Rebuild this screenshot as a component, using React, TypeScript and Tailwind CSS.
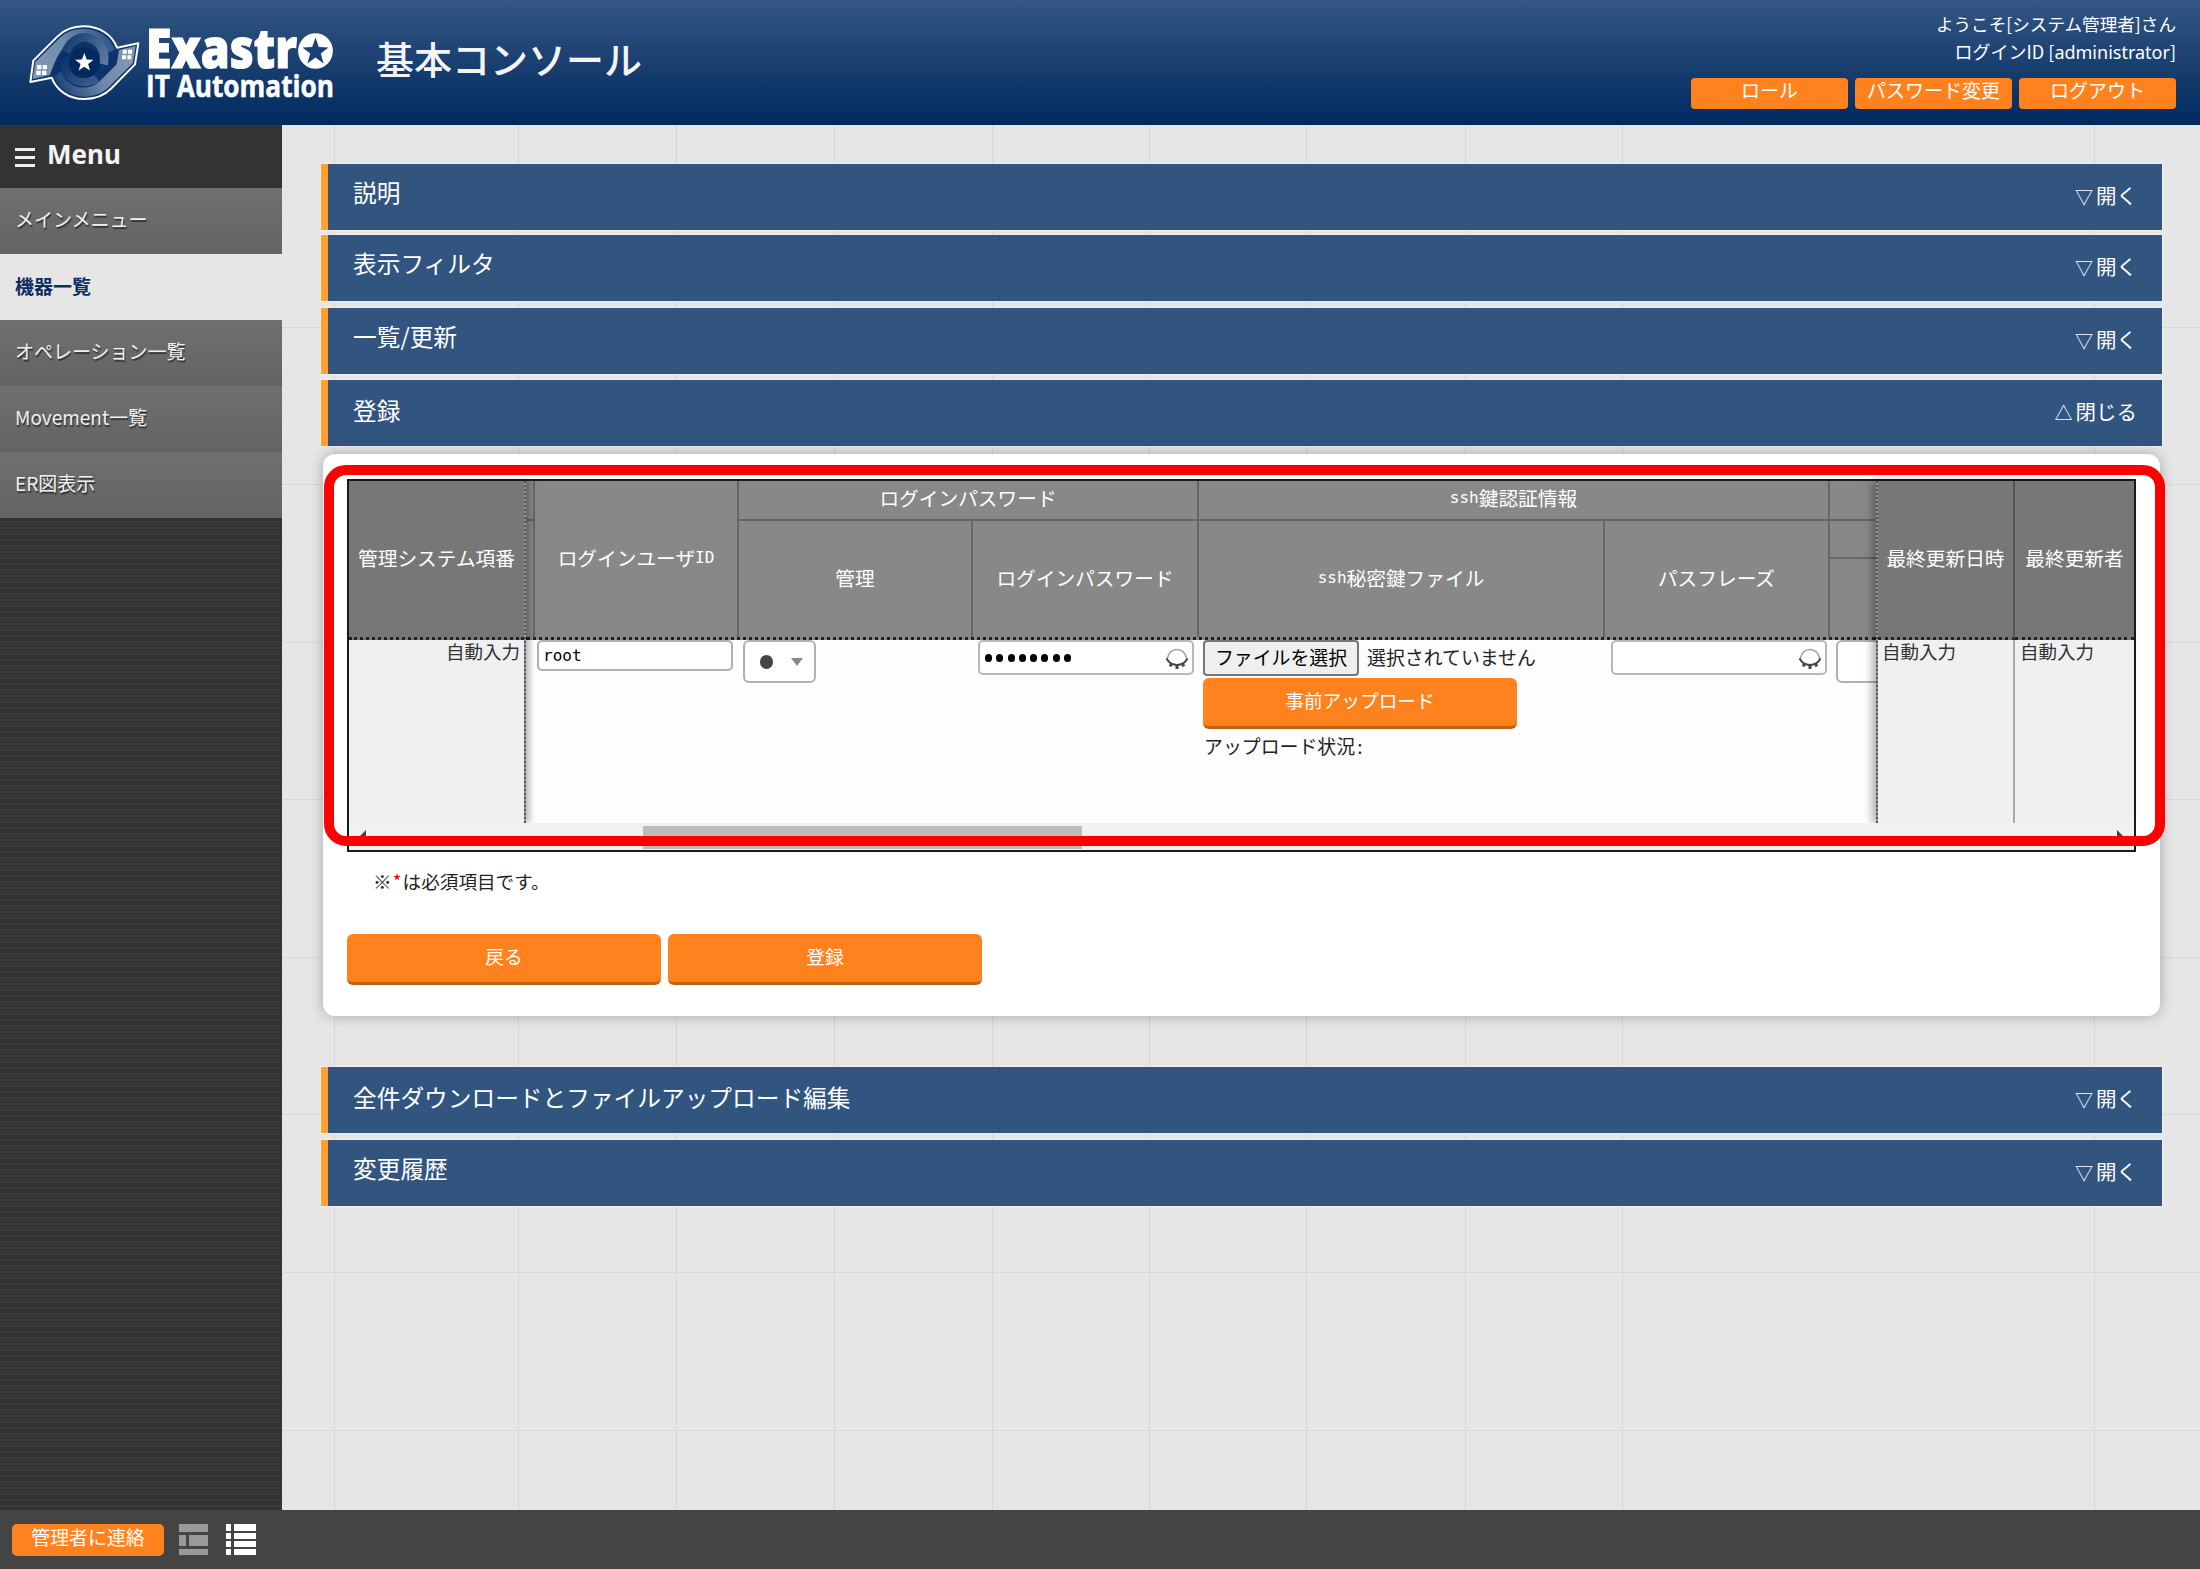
import React from "react";

const JP = "font-['Noto_Sans_CJK_JP',sans-serif]";

const V_LINES = [334, 518, 676, 834, 992, 1149, 1306, 1465, 1622, 2094];
const H_LINES = [327, 484, 642, 799, 957, 1114, 1272, 1430];

function Logo() {
  return (
    <svg width="127" height="95" viewBox="0 0 381 285" className="block">
      <defs>
        <linearGradient id="bandA" gradientUnits="userSpaceOnUse" x1="60" y1="170" x2="280" y2="80">
          <stop offset="0" stopColor="#8397b4" />
          <stop offset="0.45" stopColor="#6f88aa" />
          <stop offset="1" stopColor="#2f5488" />
        </linearGradient>
        <linearGradient id="bandB" gradientUnits="userSpaceOnUse" x1="320" y1="110" x2="110" y2="210">
          <stop offset="0" stopColor="#8397b4" />
          <stop offset="0.45" stopColor="#7089ab" />
          <stop offset="1" stopColor="#1c4479" />
        </linearGradient>
        <linearGradient id="swirlR" gradientUnits="userSpaceOnUse" x1="150" y1="80" x2="260" y2="150">
          <stop offset="0" stopColor="#1a4277" />
          <stop offset="1" stopColor="#627ca2" />
        </linearGradient>
        <linearGradient id="swirlL" gradientUnits="userSpaceOnUse" x1="130" y1="120" x2="220" y2="215">
          <stop offset="0" stopColor="#06306a" />
          <stop offset="1" stopColor="#3c5f8f" />
        </linearGradient>
      </defs>
      <path
        d="M31 201 L40 137 L112 65 C135 42 162 34 190 34 C238 34 276 58 291 98 L355 85 L345 148 L272 222 C250 244 222 252 192 252 C146 252 110 226 95 188 Z"
        fill="#0d3468"
        stroke="#fff"
        strokeWidth="6"
        strokeLinejoin="round"
      />
      <path d="M38 192 L46 141 L118 70 C138 50 164 41 190 41 C234 41 270 64 285 104 L262 114 C240 66 176 54 140 88 C116 112 104 140 90 180 Z" fill="url(#bandA)" />
      <path d="M347 93 L338 145 L267 216 C247 236 220 245 192 245 C150 245 117 222 102 186 L122 170 C144 222 204 232 240 198 L290 148 L297 105 Z" fill="url(#bandB)" />
      <path d="M138 112 A58 62 0 0 1 250 148" fill="none" stroke="url(#swirlR)" strokeWidth="26" />
      <path d="M138 112 A62 62 0 0 0 230 190" fill="none" stroke="url(#swirlL)" strokeWidth="24" />
      <circle cx="193" cy="142" r="46" fill="#03295f" />
      <path d="M193 114l7 19.500 20.500.6-16.200 12.700 5.800 19.800-17.100-11.700-17.100 11.700 5.800-19.800-16.200-12.700 20.500-.6z" fill="#fff" />
      <g fill="#fff">
        <path d="M51 150h13v13H51zM68 150h13v13H68zM49 167h13v13H49zM66 167h13v13H66z" />
        <path d="M308 104h12v12h-12zM324 104h12v12h-12zM306 121h12v12h-12zM322 121h12v12h-12z" />
      </g>
    </svg>
  );
}

function StarO() {
  return (
    <svg width="35" height="36" viewBox="0 0 35 36" className="block">
      <ellipse cx="17.500" cy="18" rx="17.400" ry="17.800" fill="#fff" />
      <path d="M17.500 4.500l3.300 9.600 9.700.3-7.700 6.200 2.800 9.900-8.100-5.900-8.100 5.900 2.800-9.900-7.700-6.200 9.700-.3z" fill="#1a4176" />
    </svg>
  );
}

function Bar({ title, open, low, className = "" }: { title: string; open?: boolean; low?: boolean; className?: string }) {
  return (
    <div
      className={`flex h-[66px] items-center justify-between border-l-[7px] border-[#ffa02f] bg-[#325580] pl-[25px] pr-[25px] text-white shadow-[0_0_0_1px_rgba(255,255,255,0.35)] ${className}`}
    >
      <span className={`pb-[8px] text-[23.700px] leading-none ${low ? "pt-[3px]" : ""}`}>{title}</span>
      <span className="flex items-center pb-[3px] text-[20.500px] leading-none">
        <span className="inline-block w-[21px] text-[18px]">{open ? "△" : "▽"}</span>
        {open ? "閉じる" : "開く"}
      </span>
    </div>
  );
}

function OrangeButton({ children, className = "" }: { children: React.ReactNode; className?: string }) {
  return (
    <button
      className={`flex h-[51px] w-[314px] items-center justify-center rounded-[6px] border-b-[3px] border-[#bf6014] bg-[#ff821e] pb-[3px] text-[18.700px] leading-none text-white ${className}`}
    >
      {children}
    </button>
  );
}

function Eye() {
  return (
    <svg width="24" height="22" viewBox="0 0 24 22" className="block">
      <path d="M2 11C3.500 5 7.500 1.500 12 1.500S20.500 5 22 11" fill="none" stroke="#a0a0a0" strokeWidth="1.500" />
      <path d="M1.500 10.500C4 15 8 17 12 17S20 15 22.500 10.500" fill="none" stroke="#444" strokeWidth="2" />
      <path d="M12 17v4M6.500 15.500l-1.200 3M17.500 15.500l1.200 3" stroke="#444" strokeWidth="3" />
    </svg>
  );
}

const HEAD = "flex items-center justify-center border-[#666] text-[19.700px] leading-none whitespace-nowrap text-white";
const MONO = "font-['DejaVu_Sans_Mono',monospace] text-[16px]";

export default function App() {
  return (
    <div className={`relative flex h-[1569px] w-[2200px] flex-col overflow-hidden bg-[#e6e6e6] ${JP}`}>
      <header className="flex h-[125px] shrink-0 justify-between bg-linear-to-b from-[#335682] to-[#00295f] pl-[20px] pr-[24px]">
        <div className="flex">
          <div className="pt-[15px]">
            <Logo />
          </div>
          <div className="flex w-[200px] flex-col pt-[24px] font-['Open_Sans',sans-serif] font-bold text-white">
            <div className="flex h-[47px] items-start">
              <svg width="151" height="47" viewBox="0 0 151 47" className="block overflow-visible">
                <text x="-1" y="43.500" fontSize="55" fontWeight="800" textLength="151" lengthAdjust="spacingAndGlyphs" fill="#fff" stroke="#fff" strokeWidth="1.200">
                  Exastr
                </text>
              </svg>
              <div className="pt-[9px]">
                <StarO />
              </div>
            </div>
            <svg width="190" height="30" viewBox="0 0 190 30" className="block overflow-visible">
              <text x="-1" y="25.500" fontSize="30" fontWeight="700" textLength="188" lengthAdjust="spacingAndGlyphs" fill="#fff" stroke="#fff" strokeWidth="0.500">
                IT Automation
              </text>
            </svg>
          </div>
          <h1 className="pl-[29px] pt-[39px] text-[38px] font-medium leading-none text-[#f4f4f4]">基本コンソール</h1>
        </div>
        <div className="flex flex-col items-end text-white">
          <div className="mt-[14px] text-[17.600px] leading-[20px]">ようこそ[システム管理者]さん</div>
          <div className="mt-[7px] text-[18px] leading-[20px]">
            ログインID [<span className="font-['Noto_Sans',sans-serif]">administrator</span>]
          </div>
          <div className="mt-[16px] flex gap-[7px]">
            {["ロール", "パスワード変更", "ログアウト"].map((t) => (
              <button key={t} className="flex h-[31px] w-[157px] items-center justify-center rounded-[4px] bg-[#ff821e] pb-[8px] text-[19px] leading-none">
                {t}
              </button>
            ))}
          </div>
        </div>
      </header>

      <div className="flex h-[1385px] shrink-0">
        <aside className="w-[282px] shrink-0 bg-[repeating-linear-gradient(#3a3a3a_0_2px,#333_2px_6px)]">
          <div className="flex h-[63px] items-center bg-[#333] pl-[15px]">
            <div className="mt-[2px] flex w-[20px] flex-col gap-[5px]">
              <div className="h-[3px] bg-[#eee]" />
              <div className="h-[3px] bg-[#eee]" />
              <div className="h-[3px] bg-[#eee]" />
            </div>
            <span className="pb-[6px] pl-[12px] font-['Noto_Sans',sans-serif] text-[26px] font-bold leading-none text-[#f4f4f4]">Menu</span>
          </div>
          {["メインメニュー", "機器一覧", "オペレーション一覧", "Movement一覧", "ER図表示"].map((t, i) =>
            i === 1 ? (
              <div key={t} className="flex h-[66px] items-center bg-[#e6e6e6] pb-[4px] pl-[15px] text-[19px] font-bold leading-none text-[#0a2d62]">
                {t}
              </div>
            ) : (
              <div
                key={t}
                className="flex h-[66px] items-center bg-linear-to-b from-[#707070] to-[#636363] pb-[5px] pl-[15px] text-[19px] leading-none text-[#f0f0f0] [text-shadow:1px_2px_1px_#333]"
              >
                {t}
              </div>
            )
          )}
        </aside>

        <main className="relative grow overflow-hidden pl-[39px] pr-[38px] pt-[39px]">
          {V_LINES.map((x) => (
            <div key={x} className="absolute top-0 h-full w-px bg-[#d8d8d8]" style={{ left: x - 282 }} />
          ))}
          {H_LINES.map((y) => (
            <div key={y} className="absolute left-0 h-px w-full bg-[#d8d8d8]" style={{ top: y - 125 }} />
          ))}
          <div className="relative">
            <Bar title="説明" />
            <Bar title="表示フィルタ" className="mt-[5px]" />
            <Bar title="一覧/更新" className="mt-[7px]" />
            <Bar title="登録" open low className="mt-[6px]" />

            <section className="mx-[2px] mt-[8px] h-[562px] rounded-[12px] bg-white pl-[24px] pt-[25px] shadow-[0_0_14px_rgba(0,0,0,0.28)]">
              <div className="h-[373px] w-[1789px] border-2 border-[#1a1a1a] bg-[#f0f0f0]">
                <div className="flex h-[342px]">
                  <div className="relative z-10 w-[177px] shrink-0 border-r-2 border-dotted border-[#555] bg-[#999] shadow-[4px_0_6px_rgba(0,0,0,0.25)]">
                    <div className={`${HEAD} h-[159px] border-b-[3px] border-dotted border-b-[#222] bg-[#777] pb-[2px]`}>管理システム項番</div>
                    <div className="h-[183px] bg-[#f0f0f0] pr-[4px] pt-[1px] text-right text-[18.500px] leading-[20px] text-[#333]">自動入力</div>
                  </div>
                  <div className="w-[1350px] shrink-0 overflow-hidden bg-[#fdfdfd]">
                    <div className="flex h-[159px] border-b-[3px] border-dotted border-[#222] bg-[#888]">
                      <div className="w-[9px] shrink-0 border-r-2 border-[#666]">
                        <div className="h-[40px] border-b-2 border-[#666]" />
                      </div>
                      <div className={`${HEAD} w-[204px] border-r-2 pb-[2px]`}>
                        ログインユーザ<span className={MONO}>ID</span>
                      </div>
                      <div className="w-[460px] border-r-2 border-[#666]">
                        <div className={`${HEAD} h-[40px] border-b-2 pb-[4px]`}>ログインパスワード</div>
                        <div className="flex h-[116px]">
                          <div className={`${HEAD} w-[234px] border-r-2 pb-[2px]`}>管理</div>
                          <div className={`${HEAD} w-[224px] pb-[2px]`}>ログインパスワード</div>
                        </div>
                      </div>
                      <div className="w-[631px] border-r-2 border-[#666]">
                        <div className={`${HEAD} h-[40px] border-b-2 pb-[4px]`}>
                          <span className={MONO}>ssh</span>鍵認証情報
                        </div>
                        <div className="flex h-[116px]">
                          <div className={`${HEAD} w-[406px] border-r-2 pb-[2px]`}>
                            <span className={MONO}>ssh</span>秘密鍵ファイル
                          </div>
                          <div className={`${HEAD} w-[223px] pb-[2px]`}>パスフレーズ</div>
                        </div>
                      </div>
                      <div className="grow">
                        <div className="h-[40px] border-b-2 border-[#666]" />
                        <div className="h-[38px] border-b-2 border-[#666]" />
                      </div>
                    </div>
                    <div className="flex items-start pl-[11px] text-[18.900px] leading-none text-[#222]">
                      <div className="h-[31px] w-[196px] shrink-0 rounded-[5px] border-2 border-[#b0b0b0] bg-white pl-[4px] font-['DejaVu_Sans_Mono',monospace] text-[16px] leading-[28px] text-black">
                        root
                      </div>
                      <div className="ml-[10px] flex h-[43px] w-[73px] shrink-0 items-center rounded-[6px] border-2 border-[#b0b0b0] bg-white pl-[15px]">
                        <span className="h-[14px] w-[13px] rounded-full bg-[#444]" />
                        <span className="ml-[18px] h-0 w-0 border-x-[6px] border-t-[8px] border-x-transparent border-t-[#888]" />
                      </div>
                      <div className="ml-[162px] flex h-[35px] w-[216px] shrink-0 items-center justify-between rounded-[5px] border-2 border-[#b8b8b8] bg-white pl-[5px] pr-[3px]">
                        <div className="flex gap-[4.300px]">
                          {[0, 1, 2, 3, 4, 5, 6, 7].map((i) => (
                            <span key={i} className="h-[8px] w-[7px] rounded-full bg-black" />
                          ))}
                        </div>
                        <div className="pt-[3px]">
                          <Eye />
                        </div>
                      </div>
                      <div className="ml-[9px] w-[400px] shrink-0">
                        <div className="flex items-center">
                          <button className="flex h-[36px] w-[156px] items-center justify-center rounded-[4px] border-2 border-[#777] bg-[#efefef] pb-[2px] leading-none text-black">
                            ファイルを選択
                          </button>
                          <span className="pb-[2px] pl-[8px]">選択されていません</span>
                        </div>
                        <OrangeButton className="mt-[2px]">事前アップロード</OrangeButton>
                        <div className="mt-[8px] pl-[1px]">
                          アップロード状況<span className="pl-[2px]">:</span>
                        </div>
                      </div>
                      <div className="ml-[8px] flex h-[35px] w-[216px] shrink-0 items-center justify-end rounded-[5px] border-2 border-[#b8b8b8] bg-white pr-[3px] pt-[3px]">
                        <Eye />
                      </div>
                      <div className="ml-[9px] h-[43px] w-[73px] shrink-0 rounded-[6px] border-2 border-[#b0b0b0] bg-white" />
                    </div>
                  </div>
                  <div className="relative z-10 flex grow border-l-2 border-dotted border-[#555] bg-[#999] shadow-[-4px_0_8px_rgba(0,0,0,0.3)]">
                    <div className="w-[137px] shrink-0">
                      <div className={`${HEAD} h-[159px] border-b-[3px] border-r-2 border-r-[#555] border-dotted [border-right-style:solid] border-b-[#222] bg-[#777] pb-[2px]`}>
                        最終更新日時
                      </div>
                      <div className="h-[183px] border-r-2 border-[#aaa] bg-[#f0f0f0] pl-[4px] pt-[1px] text-[18.500px] leading-[20px] text-[#333]">自動入力</div>
                    </div>
                    <div className="grow">
                      <div className={`${HEAD} h-[159px] border-b-[3px] border-dotted border-b-[#222] bg-[#777] pb-[2px]`}>最終更新者</div>
                      <div className="h-[183px] bg-[#f0f0f0] pl-[5px] pt-[1px] text-[18.500px] leading-[20px] text-[#333]">自動入力</div>
                    </div>
                  </div>
                </div>
                <div className="relative z-20 flex h-[27px] items-center justify-between bg-[#f1f1f1] px-[10px]">
                  <div className="h-0 w-0 border-y-[7px] border-r-[7px] border-y-transparent border-r-[#444]" />
                  <div className="absolute left-[294px] top-[3px] h-[23px] w-[439px] bg-[#bdbdbd]" />
                  <div className="h-0 w-0 border-y-[7px] border-l-[7px] border-y-transparent border-l-[#444]" />
                </div>
              </div>
              <div className="mt-[19px] pl-[26px] text-[18.600px] leading-[20px] text-[#222]">
                ※<span className="inline-block w-[11px] text-center text-red-600">*</span>は必須項目です。
              </div>
              <div className="mt-[43px] flex gap-[7px]">
                <OrangeButton>戻る</OrangeButton>
                <OrangeButton>登録</OrangeButton>
              </div>
            </section>

            <Bar title="全件ダウンロードとファイルアップロード編集" low className="mt-[51px]" />
            <Bar title="変更履歴" className="mt-[7px]" />
          </div>
        </main>
      </div>

      <footer className="flex h-[59px] shrink-0 items-center bg-[#444] pl-[12px]">
        <button className="flex h-[32px] w-[152px] items-center justify-center rounded-[5px] bg-[#ff821e] pb-[5px] text-[18.900px] leading-none text-white">
          管理者に連絡
        </button>
        <svg width="29" height="31" viewBox="0 0 29 31" className="ml-[15px]">
          <path d="M0 0h29v8H0zM0 11h7v11H0zM10 11h19v11H10zM0 25h29v6H0z" fill="#999" />
        </svg>
        <svg width="30" height="31" viewBox="0 0 30 31" className="ml-[18px]">
          <path d="M0 0h5v7H0zM8 0h22v7H8zM0 9h5v6H0zM8 9h22v6H8zM0 17h5v6H0zM8 17h22v6H8zM0 25h5v6H0zM8 25h22v6H8z" fill="#fff" />
        </svg>
      </footer>

      <div className="pointer-events-none absolute left-[324px] top-[465px] z-30 h-[381px] w-[1841px] rounded-[22px] border-[10px] border-[#ff0000]" />
    </div>
  );
}
